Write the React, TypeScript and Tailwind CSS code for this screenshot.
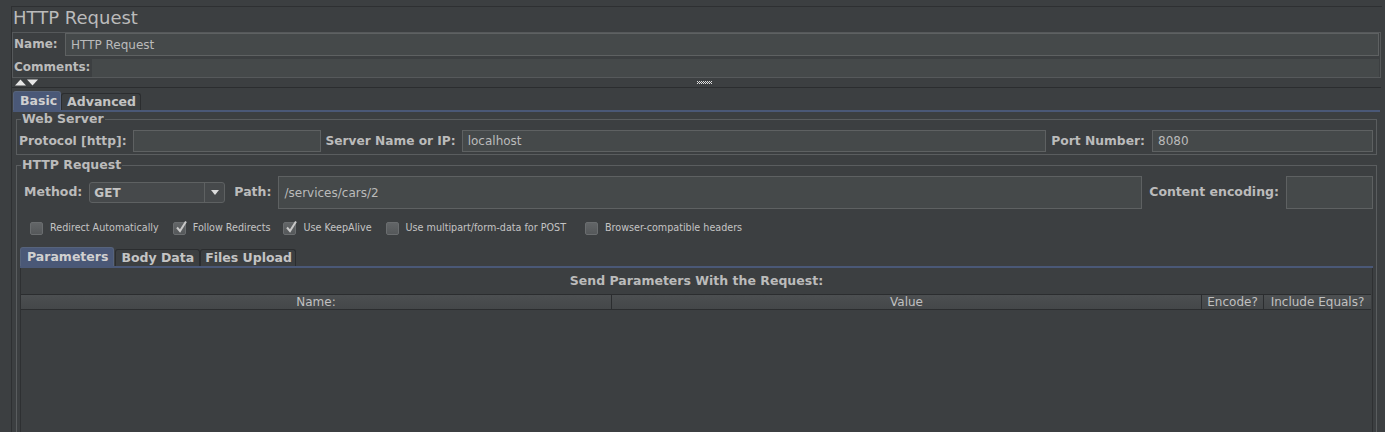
import React from "react";

const checks = [
  { label: "Redirect Automatically", on: false, gap: "mr-[14px]" },
  { label: "Follow Redirects", on: true, gap: "mr-[13px]" },
  { label: "Use KeepAlive", on: true, gap: "mr-[14px]" },
  { label: "Use multipart/form-data for POST", on: false, gap: "mr-[19px]" },
  { label: "Browser-compatible headers", on: false, gap: "mr-[14px]" },
];

const Field = ({ value = "", className = "" }: { value?: string; className?: string }) => (
  <div
    className={
      "flex items-center border border-[#5e6162] bg-[#45494a] px-[5px] text-[12px] text-[#bbbbbb] " +
      className
    }
  >
    {value}
  </div>
);

const CheckBox = ({ on }: { on: boolean }) => (
  <div className="relative h-[13px] w-[13px] rounded-[2px] border border-[#6a6d6f] bg-gradient-to-b from-[#626567] to-[#55585a]">
    {on && (
      <svg className="absolute -top-[3px] left-[1px]" width="13" height="14" viewBox="0 0 13 14">
        <path d="M2 7.5 L5 11 L11 1.5" fill="none" stroke="#c9c9c9" strokeWidth="2" />
      </svg>
    )}
  </div>
);

const Tab = ({ label, active, pad }: { label: string; active?: boolean; pad: string }) =>
  active ? (
    <div
      className={
        "flex h-[19px] items-center rounded-t-[3px] border border-b-0 border-[#56637c] bg-[#4a5877] text-[12.5px] font-bold text-[#d0d0d0] " +
        pad
      }
    >
      {label}
    </div>
  ) : (
    <div
      className={
        "mt-[2px] flex h-[17px] items-center rounded-t-[3px] border border-b-0 border-[#2b2d2f] bg-[#3c3f41] text-[12.5px] font-bold text-[#c4c4c4] " +
        pad
      }
    >
      {label}
    </div>
  );

export default function App() {
  return (
    <div className="h-[432px] w-[1385px] overflow-hidden bg-[#3c3f41] font-['DejaVu_Sans',sans-serif] text-[#bbbbbb]">
      <div className="ml-[11px] mt-[6px] h-[426px] w-[1371px] border-l border-t border-[#2e3032]">
        <div className="h-[25px] pl-[1px] pt-[1px] text-[18px] leading-[20px]">HTTP Request</div>

        {/* name / comments */}
        <div className="h-[46px] w-[1369px] border border-[#56595b]">
          <div className="flex h-[24px] items-start">
            <div className="w-[52px] pl-[1px] pt-[4px] text-[12px] font-bold leading-[14px]">Name:</div>
            <Field value="HTTP Request" className="h-[23px] w-[1314px]" />
          </div>
          <div className="flex h-[20px] items-center">
            <div className="w-[79px] pl-[1px] text-[12px] font-bold">Comments:</div>
            <div className="mt-[2px] h-[18px] w-[1287px] bg-[#45494a]" />
          </div>
        </div>

        {/* splitter */}
        <div className="flex h-[10px] w-[1369px] items-center border-b border-[#2b2d2f]">
          <svg className="ml-[3px]" width="24" height="7" viewBox="0 0 24 7">
            <path d="M0 6.5 L5.5 0.5 L11 6.5 Z" fill="#e6e6e6" />
            <path d="M12 0.5 L23 0.5 L17.5 6.5 Z" fill="#e6e6e6" />
          </svg>
          <svg className="ml-[658px]" width="16" height="4" viewBox="0 0 16 4">
            {[0, 2, 4, 6, 8, 10, 12, 14].map((x) => (
              <rect key={"a" + x} x={x} y={0} width="1" height="1" fill="#dddddd" />
            ))}
            {[1, 3, 5, 7, 9, 11, 13].map((x) => (
              <rect key={"b" + x} x={x} y={1} width="1" height="1" fill="#dddddd" />
            ))}
            {[0, 2, 4, 6, 8, 10, 12, 14].map((x) => (
              <rect key={"c" + x} x={x} y={2} width="1" height="1" fill="#dddddd" />
            ))}
          </svg>
        </div>

        {/* main tabs */}
        <div className="ml-[1px] mt-[3px] flex items-end">
          <Tab label="Basic" active pad="pl-[6px] pr-[3px]" />
          <Tab label="Advanced" pad="pl-[5px] pr-[4px]" />
        </div>
        <div className="ml-[1px] h-[2px] w-[1367px] bg-[#4a5877]" />

        <div className="ml-[1px] w-[1367px] pl-[3px]">
          {/* web server */}
          <fieldset className="w-[1361px] border border-[#5a5d5f] pb-[2px]">
            <legend className="ml-[4px] px-[1px] text-[12.5px] font-bold leading-[14px]">Web Server</legend>
            <div className="mt-[4px] flex h-[22px] items-center pl-[2px] pr-[3px]">
              <span className="text-[12.3px] font-bold">Protocol [http]:</span>
              <Field className="ml-[6px] h-[22px] w-[188px]" />
              <span className="ml-[5px] text-[12.2px] font-bold">Server Name or IP:</span>
              <Field value="localhost" className="ml-[6px] h-[22px] flex-1" />
              <span className="ml-[5px] text-[12.3px] font-bold">Port Number:</span>
              <Field value="8080" className="ml-[7px] h-[22px] w-[221px]" />
            </div>
          </fieldset>

          {/* http request */}
          <fieldset className="mt-[3px] h-[300px] w-[1361px] border border-[#5a5d5f]">
            <legend className="ml-[4px] px-[1px] text-[12.5px] font-bold leading-[14px]">HTTP Request</legend>
            <div className="mt-[4px] flex h-[33px] items-center pl-[7px] pr-[3px]">
              <span className="text-[12.5px] font-bold">Method:</span>
              <div className="ml-[7px] flex h-[21px] w-[136px] items-center rounded-[3px] border border-[#5e6162] bg-[#46494b]">
                <span className="flex-1 pl-[4px] text-[12px] font-bold text-[#c4c4c4]">GET</span>
                <div className="flex h-full w-[20px] items-center justify-center border-l border-[#5e6162]">
                  <svg width="8" height="5" viewBox="0 0 8 5">
                    <path d="M0 0 L8 0 L4 5 Z" fill="#dcdcdc" />
                  </svg>
                </div>
              </div>
              <span className="ml-[9px] text-[12.5px] font-bold">Path:</span>
              <Field value="/services/cars/2" className="ml-[7px] h-[33px] flex-1" />
              <span className="ml-[7px] text-[12.5px] font-bold">Content encoding:</span>
              <Field className="ml-[7px] h-[33px] w-[87px]" />
            </div>

            <div className="mt-[12px] flex h-[14px] items-center pl-[13px]">
              {checks.map((c) => (
                <div key={c.label} className={"flex items-center " + c.gap}>
                  <CheckBox on={c.on} />
                  <span className="ml-[7px] text-[9.6px] text-[#c4c4c4]">{c.label}</span>
                </div>
              ))}
            </div>

            {/* parameter tabs */}
            <div className="ml-[3px] mt-[12px] flex items-end">
              <Tab label="Parameters" active pad="pl-[6px] pr-[5px]" />
              <div className="w-[1px]" />
              <Tab label="Body Data" pad="pl-[5px] pr-[5px]" />
              <Tab label="Files Upload" pad="pl-[4px] pr-[3px]" />
            </div>
            <div className="ml-[3px] h-[2px] w-[1353px] bg-[#4a5877]" />
            <div className="ml-[3px] h-[200px] w-[1353px] border-l border-r border-[#2e3032]">
              <div className="flex h-[26px] items-center justify-center text-[12.5px] font-bold">
                Send Parameters With the Request:
              </div>
              <div className="flex h-[16px] w-[1350px] border-b border-t border-[#2b2d2f] bg-gradient-to-b from-[#4c4f51] to-[#444749] text-[12px] leading-[14px] text-[#c0c0c0]">
                <div className="w-[590px] text-center">Name:</div>
                <div className="w-[590px] border-l border-[#2b2d2f] text-center">Value</div>
                <div className="w-[62px] border-l border-[#2b2d2f] text-center">Encode?</div>
                <div className="flex-1 border-l border-[#2b2d2f] text-center">Include Equals?</div>
              </div>
            </div>
          </fieldset>
        </div>
      </div>
    </div>
  );
}
